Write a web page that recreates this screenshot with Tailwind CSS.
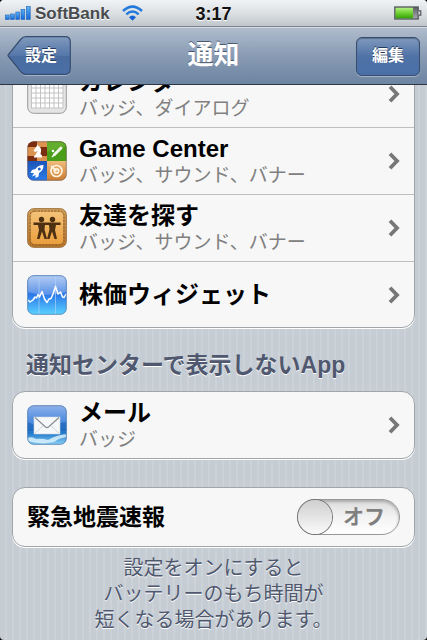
<!DOCTYPE html>
<html lang="ja">
<head>
<meta charset="utf-8">
<meta name="viewport" content="width=device-width, initial-scale=1">
<title>通知</title>
<script src="https://cdn.jsdelivr.net/npm/@tailwindcss/browser@4"></script>
</head>
<body class="bg-black font-['Liberation_Sans','Noto_Sans_CJK_JP',sans-serif]">
<svg class="hidden" aria-hidden="true">
  <symbol id="chevron" viewBox="0 0 12 18"><path d="M2 1.8 9 9 2 16.2" fill="none" stroke="#777" stroke-width="3.8"/></symbol>
</svg>
<div class="flex h-screen flex-col overflow-hidden rounded-[4px] bg-[#c5ccd4] bg-[repeating-linear-gradient(90deg,#c5ccd4_0px,#c5ccd4_5px,#cbd2d8_5px,#cbd2d8_7px)]">

  <div class="grid h-[27px] shrink-0 grid-cols-[1fr_auto_1fr] items-center border-b border-[#7d8388] bg-linear-to-b from-[#f0f3f5] via-[#dce0e3] to-[#c0c7cb] px-[5px]">
    <div class="flex items-center">
      <svg class="h-[14px] w-[26px]" viewBox="0 0 26 14" role="img" aria-label="電波">
        <defs><linearGradient id="sig" x1="0" y1="0" x2="0" y2="1"><stop offset="0" stop-color="#5bb0f5"/><stop offset="1" stop-color="#1467d8"/></linearGradient></defs>
        <g fill="url(#sig)" stroke="#1b62b8" stroke-width=".6"><rect x=".4" y="9" width="3.8" height="4.4"/><rect x="5.6" y="8" width="3.8" height="5.4"/><rect x="10.8" y="6" width="3.8" height="7.4"/><rect x="16" y="3.4" width="3.8" height="10"/><rect x="21.4" y=".6" width="3.8" height="12.8"/></g>
      </svg>
      <span class="ml-1 pt-[2px] text-[17px] leading-6 font-bold text-[#484b4e] [text-shadow:0_1px_0_#fff]">SoftBank</span>
      <svg class="ml-3 h-[16px] w-[21px]" viewBox="0 0 21 16" role="img" aria-label="Wi-Fi">
        <g fill="none" stroke="#2379dc" stroke-width="2.6"><path d="M1 6Q10.500-2.800 20 6"/><path d="M4.300 9.400Q10.500 3.600 16.700 9.400"/></g><path d="M7 12.200Q10.500 8.800 14 12.200L10.500 15.800Z" fill="#1565d5"/>
      </svg>
    </div>
    <span class="pt-[2px] text-lg leading-6 font-bold text-[#111] [text-shadow:0_1px_0_#fff]">3:17</span>
    <svg class="h-[14px] w-[28px] justify-self-end" viewBox="0 0 28 14" role="img" aria-label="バッテリー">
      <defs><linearGradient id="bat" x1="0" y1="0" x2="0" y2="1"><stop offset="0" stop-color="#b5ef83"/><stop offset=".45" stop-color="#75d437"/><stop offset="1" stop-color="#35a208"/></linearGradient><linearGradient id="emp" x1="0" y1="0" x2="0" y2="1"><stop offset="0" stop-color="#5a5d61"/><stop offset="1" stop-color="#a9acb1"/></linearGradient></defs>
      <rect x=".8" y="1" width="23.400" height="12" fill="url(#emp)" stroke="#54585c" stroke-width="1.300"/><rect x="1.500" y="1.700" width="17.500" height="10.600" fill="url(#bat)"/><path d="M24.500 4.800h2.300v4.400h-2.300" fill="#d4d7da" stroke="#54585c" stroke-width="1.200"/>
    </svg>
  </div>

  <header class="grid h-[58px] shrink-0 grid-cols-[1fr_auto_1fr] items-center border-t border-b border-t-[#d3dbe5] border-b-[#2d3642] bg-linear-to-b from-[#b0bccd] via-[#889bb3] to-[#6d84a2] px-[7px]">
    <button type="button" class="relative h-[40px] w-[64px] pl-1 text-base leading-5 font-bold text-white [text-shadow:0_-1px_0_#263b5c]">
      <svg class="absolute inset-0 h-full w-full" viewBox="0 0 64 40" aria-hidden="true">
        <defs><linearGradient id="btn" x1="0" y1="0" x2="0" y2="1"><stop offset="0" stop-color="#8099bd"/><stop offset=".5" stop-color="#5577aa"/><stop offset=".52" stop-color="#4a6c9f"/><stop offset="1" stop-color="#4a6fa8"/></linearGradient></defs>
        <path d="M19 1.500H58Q63.500 1.500 63.500 7V34Q63.500 39.500 58 39.500H19Q16 39.500 14 37L1.500 21.500Q.5 20.500 1.500 19.500L14 4Q16 1.500 19 1.500Z" fill="none" stroke="#a3b3c8" stroke-width="1"/>
        <path d="M19 .7H58Q63.300 .7 63.300 6V33Q63.300 38.300 58 38.300H19Q16 38.300 14 36L1.500 20.500Q.5 19.500 1.500 18.500L14 3Q16 .7 19 .7Z" fill="url(#btn)" stroke="#364d70" stroke-width="1.200"/>
      </svg>
      <span class="relative">設定</span>
    </button>
    <h1 class="pb-[2px] text-[26px] leading-10 font-bold text-white [text-shadow:0_-1px_0_#4a5b70]">通知</h1>
    <button type="button" class="h-[39px] w-[64px] justify-self-end rounded-md border border-[#364d70] bg-linear-to-b from-[#8099bd] from-0% via-[#4f72a6] via-50% to-[#4a6fa8] text-base leading-5 font-bold text-white shadow-[0_1px_0_#a3b3c8,inset_0_1px_1px_#5a7093] [text-shadow:0_-1px_0_#263b5c]">編集</button>
  </header>

  <main class="min-h-0 flex-1 overflow-hidden px-3">
    <ul class="-mt-[25px] overflow-hidden rounded-[13px] border border-[#a0a5aa] bg-[#f7f7f7] shadow-[0_1px_0_#fff]">
      <li class="border-b border-[#bcbfc1]">
        <a href="#calendar" class="flex h-[66px] items-center px-[14px]">
          <svg class="h-10 w-10 shrink-0" viewBox="0 0 40 40" aria-hidden="true"><rect x=".7" y=".7" width="38.600" height="38.600" rx="6" fill="#e4e4e4" stroke="#999"/><path d="M4 8H36V34H4Z" fill="#fff"/><path d="M4 9H36M4 14H36M4 19H36M4 24H36M4 29H36M4 34H36M4.500 8V34M9 8V34M13.500 8V34M18 8V34M22.500 8V34M27 8V34M31.500 8V34M36 8V34" stroke="#c3c3c3" stroke-width="1"/></svg>
          <span class="ml-3 flex-1 pt-1"><span class="block text-2xl leading-[26px] font-bold">カレンダー</span><span class="block text-[19px] leading-7 text-[#808080]">バッジ、ダイアログ</span></span>
          <svg class="h-[18px] w-3"><use href="#chevron"/></svg>
        </a>
      </li>
      <li class="border-b border-[#bcbfc1]">
        <a href="#game-center" class="flex h-[66px] items-center px-[14px]">
          <svg class="h-10 w-10 shrink-0" viewBox="0 0 40 40" aria-hidden="true">
            <defs><clipPath id="r"><rect x=".5" y=".5" width="39" height="39" rx="6"/></clipPath><linearGradient id="gw" x1="0" y1="0" x2="0" y2="1"><stop offset="0" stop-color="#efbd7c"/><stop offset="1" stop-color="#c97c32"/></linearGradient><linearGradient id="gb" x1="0" y1="0" x2="0" y2="1"><stop offset="0" stop-color="#1c55b8"/><stop offset="1" stop-color="#2c7be8"/></linearGradient></defs>
            <g clip-path="url(#r)"><path d="M0 0H20V20H0Z" fill="#dc9350"/><path d="M0 0H10V6H0ZM10 6H20V15H10ZM0 15H10V20H0Z" fill="#7a2d10"/><path d="M20 0H40V20H20Z" fill="#4a9d16"/><path d="M20 0H40V5L20 11Z" fill="#62ad2b"/><path d="M0 20H20V40H0Z" fill="url(#gb)"/><path d="M20 20H40V40H20Z" fill="url(#gw)"/></g>
            <path d="M7 16.500H15V14.500L13.500 13Q15.500 7 11.500 5L10.500 3.500 9.500 5.500 6.500 9.500 8 11 10.500 10 8.500 14 7 15Z" fill="#fff"/>
            <path d="M27.500 13.500 34 7" stroke="#f1f5ec" stroke-width="3" stroke-linecap="round"/><circle cx="26" cy="10" r="1.300" fill="#fff"/><path d="m25 16 3-3" stroke="#fff" stroke-width="1.500"/>
            <path d="M16.500 24Q11 24 8.500 28L5 29 3.500 32H7L5 35.500 8.500 34V37L11.500 35.500 12 32Q16.500 29.500 16.500 24Z" fill="#fff"/><circle cx="12.300" cy="28" r="1.500" fill="#2463c8"/>
            <g fill="none" stroke="#fff2de" stroke-width="1.700"><circle cx="29.500" cy="30" r="5.500"/><circle cx="29.500" cy="30" r="2.200"/><path d="m24 25 5.500 5"/></g>
            <rect x=".7" y=".7" width="38.600" height="38.600" rx="6" fill="none" stroke="#533" stroke-opacity=".45"/>
          </svg>
          <span class="ml-3 flex-1 pt-1"><span class="block text-2xl leading-[26px] font-bold">Game Center</span><span class="block text-[19px] leading-7 text-[#808080]">バッジ、サウンド、バナー</span></span>
          <svg class="h-[18px] w-3"><use href="#chevron"/></svg>
        </a>
      </li>
      <li class="border-b border-[#bcbfc1]">
        <a href="#find-friends" class="flex h-[66px] items-center px-[14px]">
          <svg class="h-10 w-10 shrink-0" viewBox="0 0 40 40" aria-hidden="true">
            <defs><linearGradient id="ff" x1="0" y1="0" x2="0" y2="1"><stop offset="0" stop-color="#d3a25c"/><stop offset="1" stop-color="#b9762c"/></linearGradient><linearGradient id="fi" x1="0" y1="0" x2="0" y2="1"><stop offset="0" stop-color="#f3c277"/><stop offset="1" stop-color="#eb9f3e"/></linearGradient></defs>
            <rect x=".7" y=".7" width="38.600" height="38.600" rx="6" fill="url(#ff)" stroke="#9c6b33"/><rect x="4" y="4" width="32" height="32" rx="4" fill="url(#fi)"/><rect x="3" y="3" width="34" height="34" rx="4.500" fill="none" stroke="#8b5b24" stroke-width="1" stroke-dasharray="2 1.300"/>
            <g fill="#4d2f12"><circle cx="14.500" cy="11.500" r="2.700"/><circle cx="25.500" cy="11.500" r="2.700"/><path d="M6.500 14.500H33.500V17H29L28 22 30 31H27.500L25 23.500 22.500 31H20L22.500 21.500 22 17H18L17.500 21.500 20 31H17.500L15 23.500 12.500 31H10L12 22 11 17H6.500Z"/></g>
          </svg>
          <span class="ml-3 flex-1 pt-1"><span class="block text-2xl leading-[26px] font-bold">友達を探す</span><span class="block text-[19px] leading-7 text-[#808080]">バッジ、サウンド、バナー</span></span>
          <svg class="h-[18px] w-3"><use href="#chevron"/></svg>
        </a>
      </li>
      <li>
        <a href="#stocks" class="flex h-[65px] items-center px-[14px]">
          <svg class="h-10 w-10 shrink-0" viewBox="0 0 40 40" aria-hidden="true">
            <defs><linearGradient id="st" x1="0" y1="0" x2="0" y2="1"><stop offset="0" stop-color="#3f7fdc"/><stop offset=".5" stop-color="#2c7aea"/><stop offset="1" stop-color="#5bd2ff"/></linearGradient><linearGradient id="sh" x1="0" y1="0" x2="0" y2="1"><stop offset="0" stop-color="#b5cdf2"/><stop offset="1" stop-color="#5790e8"/></linearGradient></defs>
            <rect x=".5" y=".5" width="39" height="39" rx="6" fill="url(#st)"/><path d="M.5 17V7Q.5.5 7 .5H33Q39.500.5 39.500 7V17Q20 23 .5 17Z" fill="url(#sh)"/><path d="M12 1V39M28.500 1V39" stroke="#a9d3fb" stroke-width="1" opacity=".7"/>
            <path d="M1 25 3 27 6 25 8 22 9.500 23 11 19.500 12.500 22 15 16.500 17.500 24 20 27.500 22 24 24 23.500 26 19 28.500 11.500 31 19 33.500 17 35.500 22 37 22.500 39 19" fill="none" stroke="#fff" stroke-width="1.500" stroke-linejoin="round"/>
            <rect x=".7" y=".7" width="38.600" height="38.600" rx="6" fill="none" stroke="#5a82b3" stroke-opacity=".8"/>
          </svg>
          <span class="ml-3 flex-1 text-2xl leading-[26px] font-bold">株価ウィジェット</span>
          <svg class="h-[18px] w-3"><use href="#chevron"/></svg>
        </a>
      </li>
    </ul>

    <h2 class="mt-[23px] mb-3 ml-[14px] text-[23px] leading-7 font-bold whitespace-nowrap text-[#4f586e] [text-shadow:0_1px_0_#fff]">通知センターで表示しないApp</h2>

    <ul class="rounded-[13px] border border-[#a0a5aa] bg-[#f7f7f7] shadow-[0_1px_0_#fff]">
      <li>
        <a href="#mail" class="flex h-[66px] items-center px-[14px]">
          <svg class="h-10 w-10 shrink-0" viewBox="0 0 40 40" aria-hidden="true">
            <defs><linearGradient id="ml" x1="0" y1="0" x2="0" y2="1"><stop offset="0" stop-color="#91b2ea"/><stop offset=".4" stop-color="#4e8cdf"/><stop offset=".7" stop-color="#1f76cb"/><stop offset="1" stop-color="#8fd5f5"/></linearGradient></defs>
            <g clip-path="url(#r)"><rect width="40" height="40" fill="url(#ml)"/><path d="M0 17Q10 22 20 20T40 17V26H0Z" fill="#1760b6" opacity=".6"/><path d="M0 33Q5 31 9 34 15 33 21 35 29 30 40 29V32Q32 33 27 37L16 38.500 8 37.500 0 36Z" fill="#e1f5fd" opacity=".8"/></g>
            <rect x="7" y="12" width="26" height="17" fill="#f5f7f9" stroke="#cbd5df" stroke-width=".6"/><path d="m7.500 28.500 9-8M32.500 28.500l-9-8" stroke="#c9cfd6" stroke-width=".8"/><path d="M8 12.500 18.500 22Q20 23.200 21.500 22L32 12.500" fill="none" stroke="#868c94" stroke-width="1.100"/>
            <rect x=".7" y=".7" width="38.600" height="38.600" rx="6" fill="none" stroke="#517caf" stroke-opacity=".8"/>
          </svg>
          <span class="ml-3 flex-1 pt-1"><span class="block text-2xl leading-[26px] font-bold">メール</span><span class="block text-[19px] leading-7 text-[#808080]">バッジ</span></span>
          <svg class="h-[18px] w-3"><use href="#chevron"/></svg>
        </a>
      </li>
    </ul>

    <div class="mt-7 flex h-[60px] items-center justify-between rounded-[13px] border border-[#a0a5aa] bg-[#f7f7f7] px-[14px] shadow-[0_1px_0_#fff]">
      <label for="eew" class="text-[23px] leading-7 font-bold">緊急地震速報</label>
      <div class="relative">
        <input id="eew" type="checkbox" role="switch" class="block h-9 w-[103px] appearance-none rounded-full border border-[#999] bg-linear-to-b from-[#dcdcdc] via-[#f3f3f3] to-white shadow-[inset_0_2px_3px_#aaa] before:block before:size-[34px] before:rounded-full before:bg-linear-to-b before:from-[#cfcfcf] before:to-[#fafafa] before:shadow-[0_0_0_1px_#777]">
        <span class="pointer-events-none absolute inset-y-0 right-[15px] flex items-center text-[21px] leading-6 font-bold text-[#7f7f7f]" aria-hidden="true">オフ</span>
      </div>
    </div>

    <p class="mt-2 text-center text-xl leading-[26px] text-[#4f586e] [text-shadow:0_1px_0_#fff]">設定をオンにすると<br>バッテリーのもち時間が<br>短くなる場合があります。</p>
  </main>
</div>
</body>
</html>
